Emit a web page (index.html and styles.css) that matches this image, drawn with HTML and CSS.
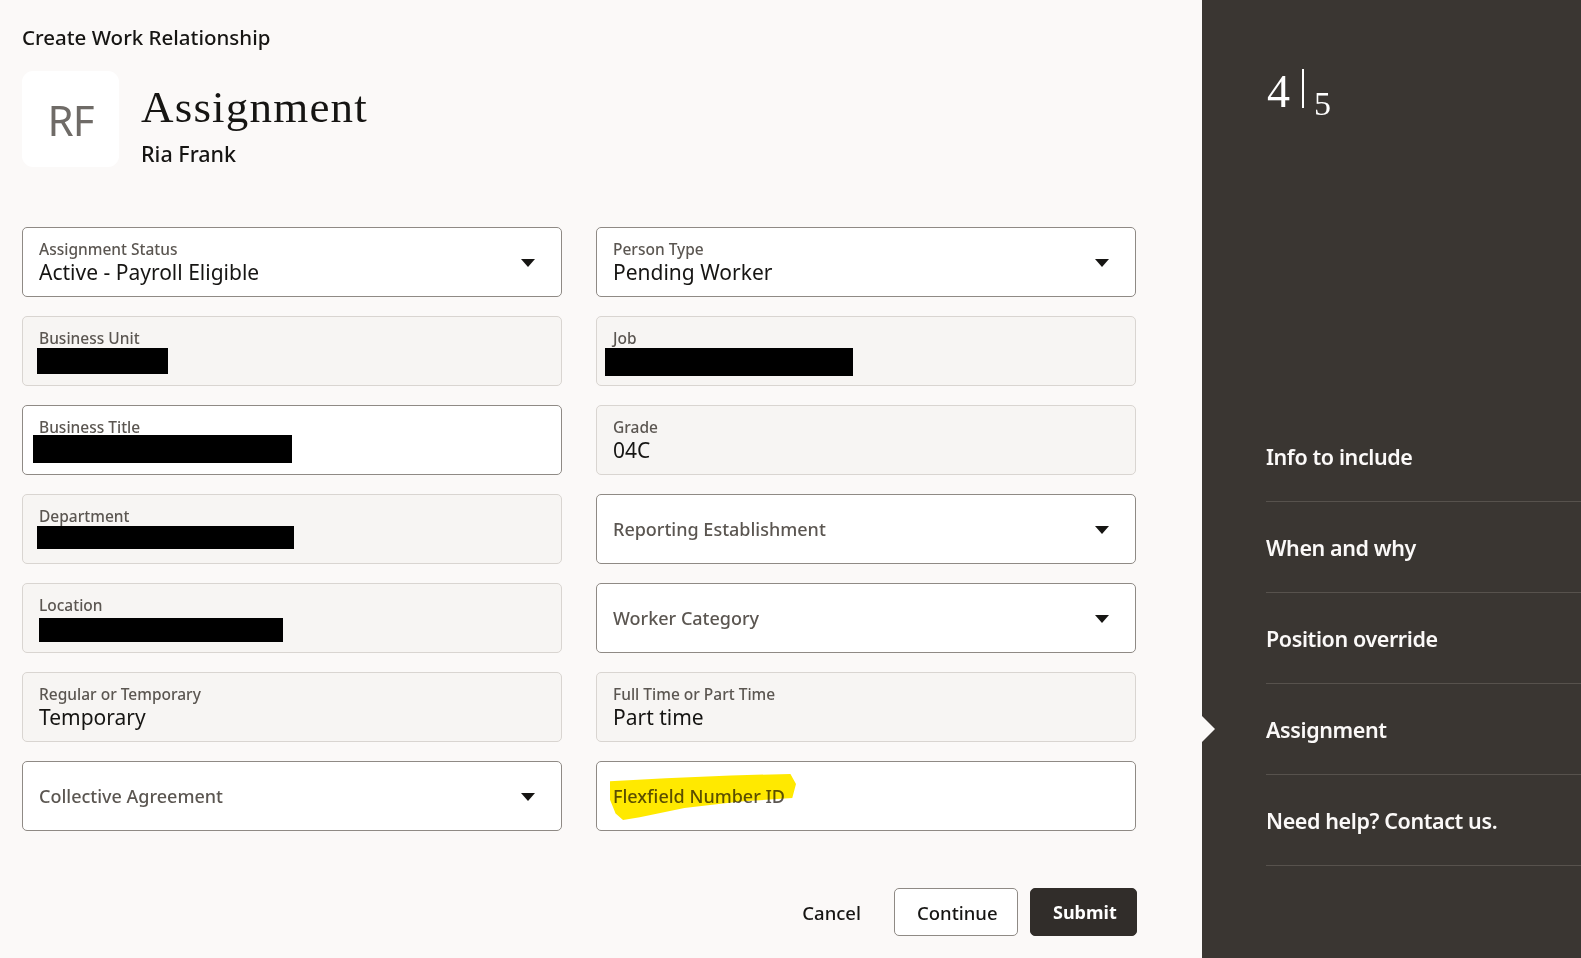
FILE: index.html
```html
<!DOCTYPE html>
<html lang="en">
<head>
<meta charset="utf-8">
<title>Create Work Relationship - Assignment</title>
<link rel="stylesheet" href="styles.css">
</head>
<body>
<div class="page">
  <main class="main">
    <div class="crumb">Create Work Relationship</div>
    <header class="header">
      <div class="avatar">RF</div>
      <div class="titles">
        <h1 class="title">Assignment</h1>
        <div class="subtitle">Ria Frank</div>
      </div>
    </header>

    <form class="grid">
      <div class="field editable">
        <div class="field-body">
          <div class="label">Assignment Status</div>
          <div class="value">Active - Payroll Eligible</div>
        </div>
        <span class="caret"></span>
      </div>
      <div class="field editable">
        <div class="field-body">
          <div class="label">Person Type</div>
          <div class="value">Pending Worker</div>
        </div>
        <span class="caret"></span>
      </div>

      <div class="field readonly">
        <div class="field-body">
          <div class="label">Business Unit</div>
          <div class="value"><span class="redact redact-bu"></span></div>
        </div>
      </div>
      <div class="field readonly">
        <div class="field-body">
          <div class="label">Job</div>
          <div class="value"><span class="redact redact-job"></span></div>
        </div>
      </div>

      <div class="field editable">
        <div class="field-body">
          <div class="label">Business Title</div>
          <div class="value"><span class="redact redact-title"></span></div>
        </div>
      </div>
      <div class="field readonly">
        <div class="field-body">
          <div class="label">Grade</div>
          <div class="value">04C</div>
        </div>
      </div>

      <div class="field readonly">
        <div class="field-body">
          <div class="label">Department</div>
          <div class="value"><span class="redact redact-dept"></span></div>
        </div>
      </div>
      <div class="field editable">
        <div class="field-body">
          <div class="placeholder">Reporting Establishment</div>
        </div>
        <span class="caret"></span>
      </div>

      <div class="field readonly">
        <div class="field-body">
          <div class="label">Location</div>
          <div class="value"><span class="redact redact-loc"></span></div>
        </div>
      </div>
      <div class="field editable">
        <div class="field-body">
          <div class="placeholder">Worker Category</div>
        </div>
        <span class="caret"></span>
      </div>

      <div class="field readonly">
        <div class="field-body">
          <div class="label">Regular or Temporary</div>
          <div class="value">Temporary</div>
        </div>
      </div>
      <div class="field readonly">
        <div class="field-body">
          <div class="label">Full Time or Part Time</div>
          <div class="value">Part time</div>
        </div>
      </div>

      <div class="field editable">
        <div class="field-body">
          <div class="placeholder">Collective Agreement</div>
        </div>
        <span class="caret"></span>
      </div>
      <div class="field editable">
        <div class="field-body">
          <div class="placeholder highlighted">Flexfield Number ID<span class="marker"></span></div>
        </div>
      </div>
    </form>

    <div class="actions">
      <button type="button" class="btn btn-text">Cancel</button>
      <button type="button" class="btn btn-outline">Continue</button>
      <button type="button" class="btn btn-primary">Submit</button>
    </div>
  </main>

  <aside class="side">
    <div class="counter">
      <span class="count-current">4</span>
      <span class="count-bar"></span>
      <span class="count-total">5</span>
    </div>
    <nav class="steps">
      <div class="step">Info to include</div>
      <div class="step">When and why</div>
      <div class="step">Position override</div>
      <div class="step active">Assignment<span class="pointer"></span></div>
      <div class="step">Need help? Contact us.</div>
    </nav>
  </aside>
</div>
</body>
</html>
```

FILE: styles.css
```css
* { box-sizing: border-box; }

html, body {
  margin: 0;
  padding: 0;
  height: 100%;
}

body {
  font-family: "Noto Sans", "Open Sans", sans-serif;
  color: #161513;
  background: #fbf9f8;
  overflow: hidden;
}

.page {
  display: flex;
  width: 1581px;
  height: 958px;
}

.main {
  width: 1202px;
  padding: 23px 0 0 22px;
  background: #fbf9f8;
}

.crumb {
  font-size: 20.5px;
  font-weight: 500;
  line-height: 28px;
  color: #161513;
}

.header {
  display: flex;
  gap: 22px;
  margin-top: 20px;
  align-items: flex-start;
}

.avatar {
  width: 97px;
  height: 96px;
  border-radius: 11px;
  background: #ffffff;
  display: flex;
  align-items: center;
  justify-content: center;
  font-size: 42px;
  color: #6f6b67;
  letter-spacing: -1px;
}

.titles {
  padding-top: 10px;
}

.title {
  margin: 0;
  font-family: "Liberation Serif", "Times New Roman", serif;
  font-weight: 400;
  font-size: 45px;
  line-height: 52px;
  letter-spacing: 1.2px;
  color: #161513;
}

.subtitle {
  margin-top: 8px;
  font-size: 21.5px;
  font-weight: 500;
  line-height: 26px;
  color: #161513;
}

.grid {
  display: grid;
  grid-template-columns: 540px 540px;
  grid-auto-rows: 70px;
  column-gap: 34px;
  row-gap: 19px;
  margin: 60px 0 0 0;
}

.field {
  display: flex;
  align-items: center;
  border-radius: 5px;
  padding: 0 26px 0 16px;
  position: relative;
}

.field.editable {
  background: #ffffff;
  border: 1px solid #8f8a85;
}

.field.readonly {
  background: #f7f5f3;
  border: 1px solid #d9d5d1;
}

.field-body {
  flex: 1;
  min-width: 0;
}

.label {
  font-size: 15.5px;
  font-weight: 500;
  line-height: 20px;
  color: #5b5651;
}

.value {
  font-size: 21px;
  line-height: 26px;
  height: 26px;
  color: #161513;
}

.placeholder {
  font-size: 18px;
  font-weight: 500;
  line-height: 26px;
  color: #5b5651;
  position: relative;
  display: inline-block;
}

.caret {
  width: 0;
  height: 0;
  border-left: 7px solid transparent;
  border-right: 7px solid transparent;
  border-top: 8px solid #161513;
  margin-top: 1px;
}

.redact {
  display: inline-block;
  background: #000000;
  vertical-align: top;
}

.redact-bu { width: 131px; height: 26px; margin-left: -2px; }
.redact-job { width: 248px; height: 28px; margin-left: -8px; }
.redact-title { width: 259px; height: 28px; margin-left: -6px; margin-top: -2px; }
.redact-dept { width: 257px; height: 23px; margin-left: -2px; }
.redact-loc { width: 244px; height: 24px; margin-top: 3px; }

.marker {
  position: absolute;
  left: -3px;
  top: -9px;
  width: 186px;
  height: 46px;
  background: #ffe900;
  mix-blend-mode: multiply;
  clip-path: polygon(0% 16%, 30% 9%, 65% 3%, 97% 0%, 100% 22%, 98% 52%, 70% 60%, 40% 74%, 16% 94%, 7% 100%, 3% 86%, 0% 56%);
}

.actions {
  display: flex;
  justify-content: flex-end;
  gap: 12px;
  width: 1115px;
  margin-top: 57px;
}

.btn {
  height: 48px;
  padding: 0 22px;
  border-radius: 5px;
  font-family: "Noto Sans", "Open Sans", sans-serif;
  font-size: 18.5px;
  font-weight: 500;
  cursor: pointer;
}

.btn-text {
  background: transparent;
  border: 1px solid transparent;
  color: #161513;
  padding: 0 20px;
}

.btn-outline {
  width: 124px;
  background: #ffffff;
  border: 1px solid #8f8a85;
  color: #161513;
}

.btn-primary {
  width: 107px;
  background: #312d2a;
  border: 1px solid #312d2a;
  color: #ffffff;
  font-weight: 700;
  font-size: 18px;
}

.side {
  width: 379px;
  background: #3a3632;
  padding: 69px 0 0 64px;
  color: #fbf9f8;
}

.counter {
  display: flex;
  align-items: flex-start;
  height: 60px;
  font-family: "Liberation Serif", "Times New Roman", serif;
  color: #ffffff;
}

.count-current {
  font-size: 46px;
  line-height: 46px;
  margin-left: 1px;
}

.count-bar {
  width: 2px;
  height: 39px;
  background: #ffffff;
  margin-left: 12px;
}

.count-total {
  font-size: 34px;
  line-height: 34px;
  margin-left: 10px;
  margin-top: 18px;
}

.steps {
  margin-top: 282px;
}

.step {
  position: relative;
  height: 91px;
  display: flex;
  align-items: center;
  border-bottom: 1px solid #57524d;
  font-size: 21.5px;
  font-weight: 600;
  letter-spacing: -0.4px;
  color: #fbf9f8;
}

.pointer {
  position: absolute;
  left: -64px;
  top: 50%;
  margin-top: -13px;
  width: 0;
  height: 0;
  border-top: 13px solid transparent;
  border-bottom: 13px solid transparent;
  border-left: 13px solid #fbf9f8;
}
```
